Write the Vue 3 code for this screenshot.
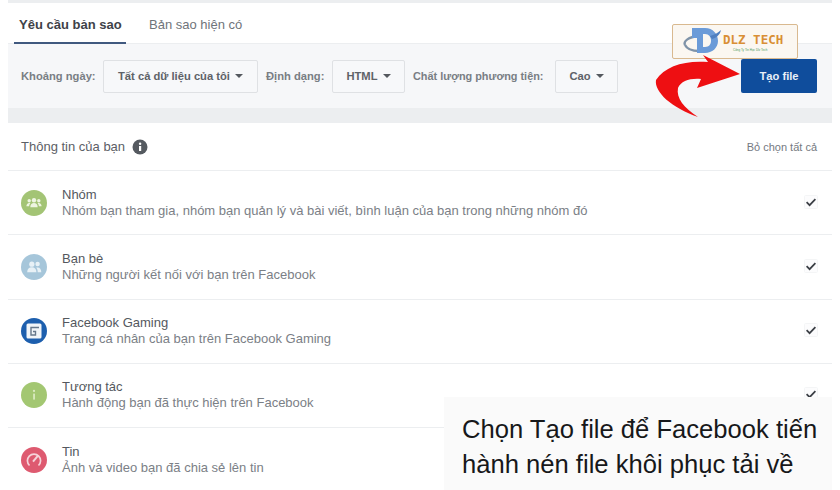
<script setup>
const rows = [
  { t: 'Nhóm', d: 'Nhóm bạn tham gia, nhóm bạn quản lý và bài viết, bình luận của bạn trong những nhóm đó', k: 'group' },
  { t: 'Bạn bè', d: 'Những người kết nối với bạn trên Facebook', k: 'friends' },
  { t: 'Facebook Gaming', d: 'Trang cá nhân của bạn trên Facebook Gaming', k: 'gaming' },
  { t: 'Tương tác', d: 'Hành động bạn đã thực hiện trên Facebook', k: 'info' },
  { t: 'Tin', d: 'Ảnh và video bạn đã chia sẻ lên tin', k: 'story' }
]
</script>

<template>
  <div class="page">
    <div class="topstrip"></div>
    <nav class="tabs">
      <span class="tab active">Yêu cầu bản sao</span>
      <span class="tab">Bản sao hiện có</span>
    </nav>
    <div class="filters">
      <span class="lab l1">Khoảng ngày:</span>
      <span class="sel s1">Tất cả dữ liệu của tôi<i class="caret"></i></span>
      <span class="lab l2">Định dạng:</span>
      <span class="sel s2">HTML<i class="caret"></i></span>
      <span class="lab l3">Chất lượng phương tiện:</span>
      <span class="sel s3">Cao<i class="caret"></i></span>
      <button class="create">Tạo file</button>
    </div>
    <div class="band"></div>
    <div class="head">
      <span class="headtitle">Thông tin của bạn</span>
      <svg class="infoicon" viewBox="0 0 16 16" width="16" height="16">
        <circle cx="8" cy="8" r="7.5" fill="#555a60" />
        <rect x="7" y="7" width="2.2" height="5" fill="#fff" />
        <circle cx="8.1" cy="4.8" r="1.2" fill="#fff" />
      </svg>
      <span class="clear">Bỏ chọn tất cả</span>
    </div>
    <div v-for="r in rows" :key="r.t" class="row">
      <svg class="ic" viewBox="0 0 26 26" width="26" height="26">
        <template v-if="r.k === 'group'">
          <circle cx="13" cy="13" r="13" fill="#a3c475" />
          <circle cx="13" cy="10.2" r="2.2" fill="#eef5e2" />
          <circle cx="8.2" cy="10.8" r="1.7" fill="#eef5e2" />
          <circle cx="17.8" cy="10.8" r="1.7" fill="#eef5e2" />
          <path d="M9.3 17.2c0-2.6 1.6-4.1 3.7-4.1s3.7 1.500 3.7 4.100zM5.400 16.200c0-2 1.200-3.300 2.800-3.300.5 0 .9.1 1.200.3-.8.8-1.200 1.800-1.300 3zM20.600 16.200c0-2-1.200-3.300-2.800-3.300-.5 0-.9.1-1.200.3.8.8 1.200 1.800 1.300 3z" fill="#eef5e2" />
        </template>
        <template v-else-if="r.k === 'friends'">
          <circle cx="13" cy="13" r="13" fill="#a6c6da" />
          <circle cx="10.8" cy="10.2" r="2.600" fill="#e8f1f6" />
          <circle cx="16.600" cy="10" r="2.200" fill="#e8f1f6" />
          <path d="M6.200 18.200c0-3.200 1.900-5 4.600-5s4.600 1.800 4.600 5zM16.700 18.200h3.600c0-3-1.500-4.700-3.700-4.700-.6 0-1 .1-1.400.3 1 1 1.500 2.500 1.500 4.400z" fill="#e8f1f6" />
        </template>
        <template v-else-if="r.k === 'gaming'">
          <circle cx="13" cy="13" r="13" fill="#1d5fae" />
          <rect x="5.500" y="5.500" width="15" height="15" rx="1.500" fill="#f1f5f9" />
          <path d="M18 9.500H10v7.500h4.500v-3.500H12" fill="none" stroke="#66788c" stroke-width="1.400" />
        </template>
        <template v-else-if="r.k === 'info'">
          <circle cx="13" cy="13" r="13" fill="#a3c772" />
          <rect x="12.200" y="11.600" width="1.700" height="6" fill="#dcebc4" />
          <circle cx="13" cy="8.900" r="1.100" fill="#dcebc4" />
        </template>
        <template v-else>
          <circle cx="13" cy="13" r="13" fill="#de5a70" />
          <path d="M8.500 18.500a6.600 6.600 0 1 1 9 0" fill="none" stroke="#f6d3da" stroke-width="1.700" />
          <path d="M12 14.600l5-6" fill="none" stroke="#f6d3da" stroke-width="2" />
        </template>
      </svg>
      <div class="txt">
        <div class="t">{{ r.t }}</div>
        <div class="d">{{ r.d }}</div>
      </div>
      <svg class="check" viewBox="0 0 14 14" width="14" height="14">
        <rect x="0.5" y="0.5" width="13" height="13" rx="1" fill="#fcfcfd" stroke="#f4f5f6" />
        <path d="M2.600 7.200l3 3 5.800-6" fill="none" stroke="#3b3f45" stroke-width="1.700" />
      </svg>
    </div>

    <div class="logo">
      <svg class="logomark" viewBox="680 25 44 30" width="44" height="30">
        <path d="M685 45C683 41 689 37 698 36" fill="none" stroke="#7f93a8" stroke-width="2.400" />
        <path d="M685 45C687 49 693 51 699 51" fill="none" stroke="#7f93a8" stroke-width="2.400" />
        <path fill-rule="evenodd" d="M692 28H705C713 28 718 34 718 41C718 48 712 53 705 53H697V38H692ZM703 34V47H705C709 47 711 44 711 41C711 37 709 34 705 34Z" fill="#6b9bd8" />
        <path d="M710 36C714 35 718 33 721 30C720 35 716 38 712 39Z" fill="#4f7fc0" />
      </svg>
      <span class="logotext">DLZ TECH</span>
      <span class="logosub">Công Ty Tin Học Dlz Tech</span>
    </div>
    <svg class="arrow" viewBox="650 50 100 72" width="100" height="72">
      <path d="M740 74L703 55L708 62C685 60 665 66 656 80C654 92 672 108 698 117C684 108 676 98 678 88C681 81 690 78 701 79L697 88Z" fill="#ee0f12" />
    </svg>
    <div class="caption">Chọn Tạo file để Facebook tiến<br />hành nén file khôi phục tải về</div>
  </div>
</template>

<style scoped>
.page {
  position: relative;
  width: 840px;
  height: 490px;
  overflow: hidden;
  background: #fff;
  font-family: "Liberation Sans", Arial, sans-serif;
  color: #5f646b;
}
.topstrip {
  height: 3px;
  margin-left: 8px;
  width: 824px;
  background: #eceef0;
}
.tabs {
  display: flex;
  margin-left: 8px;
  width: 824px;
  height: 41px;
  border-bottom: 1px solid #eceef0;
  box-sizing: border-box;
}
.tab {
  box-sizing: border-box;
  height: 41px;
  padding: 14px 0 0;
  font-size: 13px;
  color: #6f747a;
  margin-left: 23px;
}
.tab.active {
  width: 112px;
  margin-left: 6px;
  padding-left: 5px;
  font-weight: 700;
  color: #3e4248;
  border-bottom: 2px solid #40597f;
  white-space: nowrap;
}
.filters {
  display: flex;
  align-items: center;
  margin-left: 8px;
  width: 824px;
  height: 64px;
  box-sizing: border-box;
  background: #f6f7f9;
}
.lab {
  font-size: 11.2px;
  font-weight: 700;
  color: #797e84;
  white-space: nowrap;
  flex: none;
}
.l1 { margin-left: 13px; width: 74px; }
.l2 { margin-left: 8px; width: 58px; }
.l3 { margin-left: 8px; width: 131px; font-size: 10.9px; }
.sel {
  display: flex;
  align-items: center;
  justify-content: center;
  box-sizing: border-box;
  height: 33px;
  margin-left: 8px;
  flex: none;
  font-size: 11.2px;
  font-weight: 700;
  color: #5e6268;
  background: #f7f8fa;
  border: 1px solid #dfe1e4;
  border-radius: 2px;
}
.s1 { width: 155px; }
.s2 { width: 73px; }
.s3 { width: 63px; margin-left: 11px; }
.caret {
  display: inline-block;
  margin-left: 5px;
  border-left: 4px solid transparent;
  border-right: 4px solid transparent;
  border-top: 4px solid #54585e;
}
.create {
  box-sizing: border-box;
  width: 76px;
  height: 34px;
  margin-left: auto;
  margin-right: 15px;
  padding: 0;
  border: 0;
  border-radius: 2px;
  background: #0f4d9c;
  color: #e9f0f8;
  font: 700 11.2px "Liberation Sans", Arial, sans-serif;
}
.band {
  margin-left: 8px;
  width: 824px;
  height: 15px;
  background: #eceef0;
}
.head {
  display: flex;
  align-items: center;
  margin-left: 8px;
  width: 824px;
  height: 48px;
  box-sizing: border-box;
  padding: 0 15px 0 13px;
  border-bottom: 1px solid #eceef0;
}
.headtitle {
  font-size: 13px;
  color: #5c6066;
}
.infoicon { margin-left: 7px; }
.clear {
  margin-left: auto;
  font-size: 11px;
  color: #74797f;
}
.row {
  display: flex;
  align-items: center;
  margin-left: 8px;
  width: 824px;
  height: 64.25px;
  box-sizing: border-box;
  padding: 0 15px 0 13px;
  border-bottom: 1px solid #eceef0;
}
.ic { flex: none; }
.txt {
  flex: 1;
  margin-left: 15px;
  font-size: 13px;
  line-height: 16px;
}
.t { color: #54585e; }
.d { color: #7b8086; }
.check { flex: none; margin: 0 -1px 2px 0; }
.logo {
  position: absolute;
  left: 672px;
  top: 24px;
  width: 126px;
  height: 35px;
  box-sizing: border-box;
  background: #fbf7f1;
  border: 1px solid #d9b98f;
  border-radius: 2px;
}
.logomark { position: absolute; left: 7px; top: 0; }
.logotext {
  position: absolute;
  left: 50px;
  top: 7px;
  font: 700 12.5px "DejaVu Sans Mono", monospace;
  color: #d98f35;
  white-space: nowrap;
}
.logosub {
  position: absolute;
  left: 60px;
  top: 23px;
  font-size: 3px;
  color: #4a9a5a;
  white-space: nowrap;
}
.arrow {
  position: absolute;
  left: 650px;
  top: 50px;
}
.caption {
  position: absolute;
  left: 444px;
  top: 397px;
  width: 388px;
  height: 93px;
  box-sizing: border-box;
  padding: 15px 0 0 18px;
  background: #fafafa;
  color: #17181a;
  font-size: 25.6px;
  line-height: 35px;
  white-space: nowrap;
}
</style>
